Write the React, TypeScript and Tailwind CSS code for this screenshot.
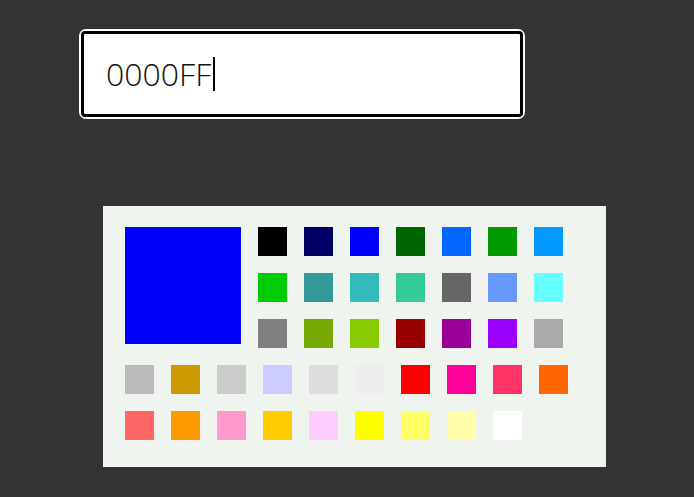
const topColors = [
  '#000000', '#000066', '#0000ff', '#006600', '#0066ff', '#009900', '#0099ff',
  '#00cc00', '#339999', '#33bbbb', '#33cc99', '#666666', '#6699ff', '#66ffff',
  '#7f7f7f', '#77aa00', '#88cc00', '#990000', '#990099', '#9900ff', '#aaaaaa',
];

const bottomColors = [
  '#bbbbbb', '#cc9900', '#cccccc', '#ccccff', '#dddddd', '#eeeeee', '#ff0000', '#ff0099', '#ff3366', '#ff6600',
  '#ff6666', '#ff9900', '#ff99cc', '#ffcc00', '#ffccff', '#ffff00', '#ffff66', '#ffffaa', '#ffffff',
];

function Swatch({ color }: { color: string }) {
  return <div className="w-[29px] h-[29px]" style={{ backgroundColor: color }} />;
}

export default function App() {
  const value = '0000FF';
  const selected = '#0000ff';

  return (
    <div className="w-[694px] h-[497px] bg-[#333333] overflow-hidden pt-[29px]">
      {/* hex input */}
      <div className="ml-[79px] w-[446px] h-[90px] border-2 border-white rounded-[7px]">
        <div className="w-full h-full bg-white border-[3px] border-black rounded-[4px] flex items-center pl-[22px]">
          <span
            className="text-[32px] font-light text-[#111111] leading-none"
            style={{ fontFamily: '"Open Sans", "Noto Sans", sans-serif' }}
          >
            {value}
          </span>
          <span className="ml-[2px] w-[2px] h-[34px] bg-black" />
        </div>
      </div>

      {/* palette */}
      <div className="ml-[103px] mt-[87px] w-[503px] h-[261px] bg-[#eff4ef] pl-[22px] pt-[21px]">
        <div className="flex gap-[17px]">
          <div className="w-[116px] h-[117px]" style={{ backgroundColor: selected }} />
          <div className="grid grid-cols-[repeat(7,29px)] gap-[17px]">
            {topColors.map((c) => (
              <Swatch key={c} color={c} />
            ))}
          </div>
        </div>
        <div className="grid grid-cols-[repeat(10,29px)] gap-x-[17px] gap-y-[17px] mt-[17px]">
          {bottomColors.map((c) => (
            <Swatch key={c} color={c} />
          ))}
        </div>
      </div>
    </div>
  );
}
